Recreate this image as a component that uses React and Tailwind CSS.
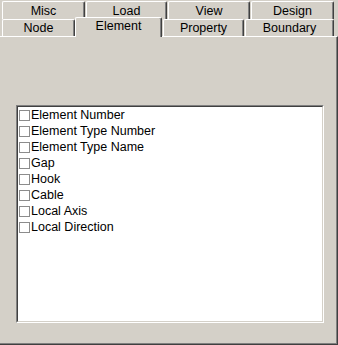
import React from "react";

const topTabs = [
  { label: "Misc", w: "w-[83px]" },
  { label: "Load", w: "w-[81px]" },
  { label: "View", w: "w-[82px]" },
  { label: "Design", w: "w-[83px]" },
];

const items = [
  "Element Number",
  "Element Type Number",
  "Element Type Name",
  "Gap",
  "Hook",
  "Cable",
  "Local Axis",
  "Local Direction",
];

const tabBase =
  "flex items-center justify-center border-t border-l border-r border-t-white border-l-white border-r-[#404040] rounded-t-[2px] shadow-[inset_-1px_0_0_#808080] bg-[#d4d0c8]";

const App = () => {
  return (
    <div
      className="w-[338px] h-[345px] bg-[#d4d0c8] text-black text-[12.5px] leading-none overflow-hidden"
      style={{ fontFamily: '"Liberation Sans", Arial, sans-serif' }}
    >
      {/* upper tab row */}
      <div className="flex gap-[1px] pl-[2px] pt-[1px] h-[19px]">
        {topTabs.map((t) => (
          <div key={t.label} className={`${tabBase} ${t.w} h-[18px] pt-[1px]`}>
            {t.label}
          </div>
        ))}
      </div>

      {/* lower tab row */}
      <div className="flex pl-[2px] h-[17px]">
        <div className={`${tabBase} w-[73px] h-[17px] pt-[1px]`}>Node</div>
        <div
          className={`${tabBase} relative z-10 w-[87px] h-[20px] -mt-[2px] -mb-[1px] pb-[3px]`}
        >
          Element
        </div>
        <div className={`${tabBase} w-[81px] h-[17px] ml-[1px] pt-[1px]`}>Property</div>
        <div className={`${tabBase} w-[89px] h-[17px] ml-[1px] pt-[1px]`}>Boundary</div>
      </div>

      {/* panel */}
      <div className="w-[338px] h-[309px] border-t border-t-white border-r border-r-[#404040] border-b border-b-[#404040] shadow-[inset_-1px_-1px_0_#808080] pt-[68px] pl-[16px]">
        <div className="w-[308px] h-[218px] border border-t-[#808080] border-l-[#808080] border-b-white border-r-white">
          <div className="w-full h-full bg-white border border-t-[#404040] border-l-[#404040] border-b-[#d4d0c8] border-r-[#d4d0c8] pt-[0px]">
            {items.map((it) => (
              <div key={it} className="flex items-center h-[16px] pl-[1px]">
                <div className="w-[11px] h-[11px] border border-[#8c8c8c] bg-white shrink-0" />
                <span className="ml-[1px]">{it}</span>
              </div>
            ))}
          </div>
        </div>
      </div>
    </div>
  );
};

export default App;
